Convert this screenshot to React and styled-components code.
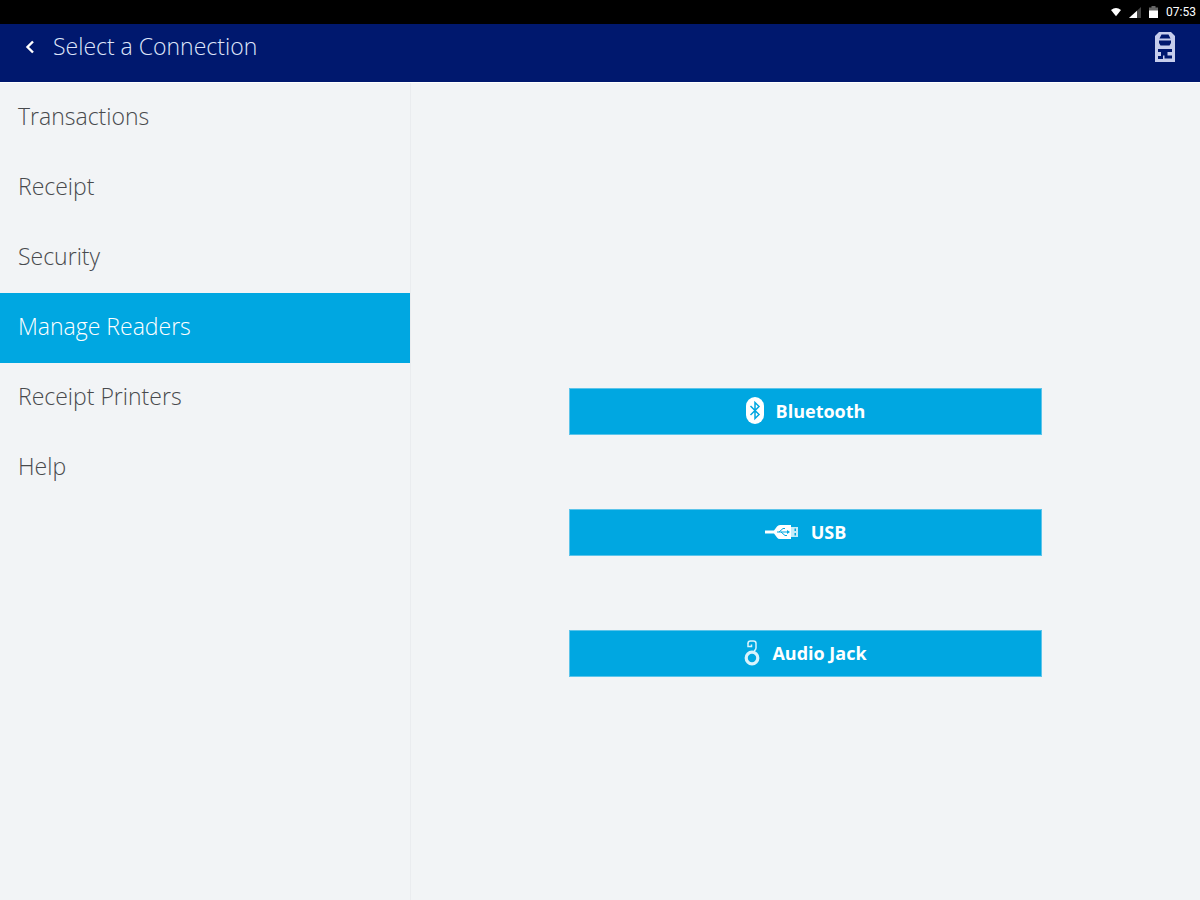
import React, { useState } from 'react'
import styled, { createGlobalStyle } from 'styled-components'

const menu = ['Transactions', 'Receipt', 'Security', 'Manage Readers', 'Receipt Printers', 'Help']

const App = () => {
    const [active, setActive] = useState('Manage Readers')
    return (
        <Page>
            <GlobalStyle />
            <StatusBar>
                <WifiIcon />
                <SignalIcon />
                <BatteryIcon />
                <Clock>07:53</Clock>
            </StatusBar>
            <Header>
                <IconButton aria-label="Back">
                    <BackIcon />
                </IconButton>
                <Title>Select a Connection</Title>
                <IconButton aria-label="Card reader">
                    <ReaderIcon />
                </IconButton>
            </Header>
            <Content>
                <Sidebar>
                    {menu.map(item => (
                        <MenuItem
                            key={item}
                            href="#"
                            $active={item === active}
                            aria-current={item === active ? 'page' : undefined}
                            onClick={() => setActive(item)}
                        >
                            {item}
                        </MenuItem>
                    ))}
                </Sidebar>
                <Main>
                    <ConnectionButton><BluetoothIcon />Bluetooth</ConnectionButton>
                    <ConnectionButton><UsbIcon />USB</ConnectionButton>
                    <ConnectionButton><JackIcon />Audio Jack</ConnectionButton>
                </Main>
            </Content>
        </Page>
    )
}

const WifiIcon = () => (
    <svg width="10" height="10" viewBox="0 0 12 10" aria-hidden="true">
        <path d="M0 2.6Q6-2 12 2.6L6 10Z" fill="#fff" />
    </svg>
)

const SignalIcon = () => (
    <svg width="12" height="11" viewBox="0 0 12 11" aria-hidden="true">
        <path d="M0 11L12 0V11Z" fill="#444" />
        <path d="M0 11L8 3.7V11Z" fill="#fff" />
    </svg>
)

const BatteryIcon = () => (
    <svg width="9" height="12" viewBox="0 0 9 12" aria-hidden="true">
        <path d="M0 1.5H2.5V0H6.5V1.5H9V5H0Z" fill="#666" />
        <path d="M0 4.5H9V12H0Z" fill="#fff" />
    </svg>
)

const BackIcon = () => (
    <svg width="10" height="14" viewBox="0 0 10 14" aria-hidden="true">
        <path d="M8 1.5L2.5 7L8 12.5" fill="none" stroke="#fff" strokeWidth="2.4" />
    </svg>
)

const ReaderIcon = () => (
    <svg width="20" height="32" viewBox="0 0 20 32" aria-hidden="true">
        <path d="M4 1H16L20 5V31H0V5Z" fill="#c6cdec" />
        <path d="M6.5 3.5H13.5L15.5 7.5H4.5Z" fill="#00186e" />
        <path d="M4 9.5H16V12L14.5 14.5H5.5L4 12Z" fill="#00186e" />
        <path d="M3 18H17V21H12.5V24.5H17V27.5H9.5V24.5H8V28H3V25H6V21H3Z" fill="#00186e" />
    </svg>
)

const BluetoothIcon = () => (
    <svg width="18" height="27" viewBox="0 0 18 27" aria-hidden="true">
        <rect width="18" height="27" rx="9" fill="#fff" />
        <path d="M4.5 9L13 17.5L9 21.5V5.5L13 9.5L4.5 18" fill="none" stroke="#00a7e1" strokeWidth="1.5" />
    </svg>
)

const UsbIcon = () => (
    <svg width="34" height="16" viewBox="0 0 34 16" aria-hidden="true">
        <path d="M0 6.5H9L12 2.5Q13 1 15 1H26V15H15Q13 15 12 13.5L9 9.5H0Z" fill="#fff" />
        <path d="M26 3H33V13H26Z" fill="#c5ecf9" />
        <path d="M29.5 4.5H31V7H29.5ZM29.5 9H31V11.5H29.5Z" fill="#00a7e1" />
        <path d="M12 8H23M14 8L18 4.5H20M16 8L20 11.5H22" fill="none" stroke="#00a7e1" strokeWidth="1" />
        <path d="M22 6L25 8L22 10Z" fill="#00a7e1" />
    </svg>
)

const JackIcon = () => (
    <svg width="16" height="26" viewBox="0 0 16 26" aria-hidden="true">
        <circle cx="8" cy="18" r="5.8" fill="none" stroke="#d9f3fc" strokeWidth="3.2" />
        <path d="M4 3.5Q4 1 6.5 1H9.5Q12 1 12 3.5V8Q12 10 10 11" fill="none" stroke="#d9f3fc" strokeWidth="1.5" />
        <path d="M4 3V6.5H7.5V4.5" fill="none" stroke="#d9f3fc" strokeWidth="1.5" />
    </svg>
)

const GlobalStyle = createGlobalStyle`
    * {
        box-sizing: border-box;
    }
    body {
        margin: 0;
        background: #f2f4f6;
        font-family: "Open Sans", "Noto Sans", sans-serif;
    }
`

const Page = styled.div`
    display: flex;
    flex-direction: column;
    min-height: 100vh;
`

const StatusBar = styled.div`
    display: flex;
    align-items: center;
    justify-content: flex-end;
    gap: 8px;
    height: 24px;
    padding-right: 4px;
    background: #000;
    color: #fff;
`

const Clock = styled.span`
    font-family: Roboto, sans-serif;
    font-size: 12px;
    line-height: 16px;
`

const Header = styled.header`
    display: flex;
    align-items: center;
    gap: 16px;
    height: 59px;
    padding: 0 23px 14px;
    background: #00186e;
    border-bottom: 1px solid #fff;
`

const IconButton = styled.button`
    display: flex;
    padding: 2px 2px 0;
    border: 0;
    background: none;
    cursor: pointer;
`

const Title = styled.h1`
    flex: 1;
    margin: 0;
    color: #dfe5fa;
    font-size: 23px;
    font-weight: 300;
    line-height: 32px;
`

const Content = styled.div`
    display: flex;
    flex: 1;
`

const Sidebar = styled.nav`
    width: 34.25%;
    border-right: 1px solid #eaecef;
`

const MenuItem = styled.a`
    display: block;
    padding: 17px 18px 21px;
    background: ${props => (props.$active ? '#00a7e1' : 'transparent')};
    color: ${props => (props.$active ? '#fff' : '#484a4d')};
    font-size: 23px;
    font-weight: 300;
    line-height: 32px;
    text-decoration: none;
`

const Main = styled.main`
    display: flex;
    flex: 1;
    flex-direction: column;
    align-items: center;
    justify-content: center;
    gap: 74px;
    padding-top: 81px;
`

const ConnectionButton = styled.button`
    display: flex;
    align-items: center;
    justify-content: center;
    gap: 12px;
    width: 60%;
    height: 47px;
    padding: 0 0 1px;
    border: 1px solid #5cc4ea;
    background: #00a7e1;
    color: #fff;
    font-family: inherit;
    font-size: 18px;
    font-weight: 700;
    cursor: pointer;
`

export default App
